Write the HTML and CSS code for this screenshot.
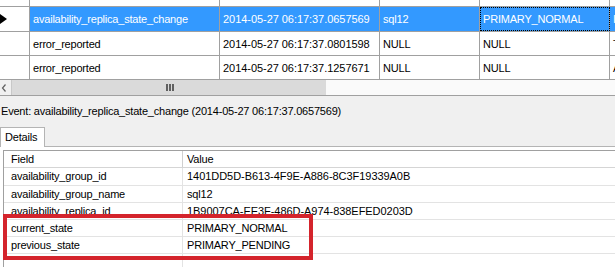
FILE: index.html
```html
<!DOCTYPE html>
<html>
<head>
<meta charset="utf-8">
<link rel="stylesheet" href="styles.css">
</head>
<body>
<div class="grid">
  <div class="row r0">
    <div class="cell hdr"></div>
    <div class="cell c1">log_flush_requested</div>
    <div class="cell c2"></div>
    <div class="cell c3"></div>
    <div class="cell c4"></div>
    <div class="cell c5"></div>
  </div>
  <div class="row r1 selected">
    <div class="cell hdr"><svg class="arrow" width="9" height="12" viewBox="0 0 9 12"><polygon points="0,1 7,6 0,11" fill="#000"/></svg></div>
    <div class="cell c1">availability_replica_state_change</div>
    <div class="cell c2 num">2014-05-27 06:17:37.0657569</div>
    <div class="cell c3">sql12</div>
    <div class="cell c4 focus">PRIMARY_NORMAL</div>
    <div class="cell c5">I</div>
  </div>
  <div class="row r2">
    <div class="cell hdr"></div>
    <div class="cell c1">error_reported</div>
    <div class="cell c2 num">2014-05-27 06:17:37.0801598</div>
    <div class="cell c3">NULL</div>
    <div class="cell c4">NULL</div>
    <div class="cell c5">T</div>
  </div>
  <div class="row r3">
    <div class="cell hdr"></div>
    <div class="cell c1">error_reported</div>
    <div class="cell c2 num">2014-05-27 06:17:37.1257671</div>
    <div class="cell c3">NULL</div>
    <div class="cell c4">NULL</div>
    <div class="cell c5">A</div>
  </div>
</div>
<div class="hscroll">
  <div class="sb-btn"><svg width="6" height="8" viewBox="0 0 6 8"><polyline points="4.5,0.5 1.5,4 4.5,7.5" fill="none" stroke="#606060" stroke-width="1.2"/></svg></div>
  <div class="sb-thumb"><span class="grip"></span><span class="grip"></span><span class="grip"></span></div>
  <div class="sb-track"></div>
</div>
<div class="lower">
  <div class="event">Event: availability_replica_state_change (2014-05-27 06:17:37.0657569)</div>
  <div class="tabs">
    <div class="tab">Details</div>
    <div class="tabline"></div>
  </div>
  <div class="tabpage">
    <div class="props">
      <div class="prow phead"><div class="pf">Field</div><div class="pv">Value</div></div>
      <div class="prow first"><div class="pf">availability_group_id</div><div class="pv num">1401DD5D-B613-4F9E-A886-8C3F19339A0B</div></div>
      <div class="prow"><div class="pf">availability_group_name</div><div class="pv">sql12</div></div>
      <div class="prow"><div class="pf">availability_replica_id</div><div class="pv num">1B9007CA-EE3F-486D-A974-838EFED0203D</div></div>
      <div class="prow"><div class="pf">current_state</div><div class="pv">PRIMARY_NORMAL</div></div>
      <div class="prow"><div class="pf">previous_state</div><div class="pv">PRIMARY_PENDING</div></div>
      <div class="prow"><div class="pf"></div><div class="pv"></div></div>
    </div>
    <div class="highlight"></div>
  </div>
</div>
</body>
</html>
```
FILE: styles.css
```css
* { box-sizing: border-box; }
html, body { margin: 0; padding: 0; }
body {
  width: 615px;
  height: 267px;
  overflow: hidden;
  background: #f0f0f0;
  font-family: "Liberation Sans", Arial, sans-serif;
  font-size: 11px;
  letter-spacing: -0.2px;
  color: #000;
}

/* top data grid */
.grid {
  background: #fff;
  margin-top: -18px;
}
.row {
  display: grid;
  grid-template-columns: 30px 190px 160px 100px 130px 1fr;
  border-bottom: 1px solid #a0a0a0;
}
.r0 { height: 25px; }
.r1 { height: 25px; }
.r2 { height: 24px; }
.r3 { height: 24px; }
.cell {
  display: flex;
  align-items: center;
  padding-left: 3px;
  white-space: nowrap;
  overflow: hidden;
  border-right: 1px solid #a0a0a0;
}
.cell.c5 { border-right: none; }
.cell.c2 { padding-left: 3px; }
.num { letter-spacing: -0.05px; }
.cell.hdr { padding-left: 0; background: #fff; }
.selected .cell:not(.hdr) {
  background: #3399ff;
  color: #fff;
}
.focus {
  outline: 1px dotted #000;
  outline-offset: -1px;
}
.arrow { display: block; }

/* horizontal scrollbar */
.hscroll {
  display: flex;
  height: 15px;
  background: #fafafa;
}
.sb-btn {
  width: 12px;
  background: #f0f0f0;
  border-right: 1px solid #c8c8c8;
  display: flex;
  align-items: center;
  padding-left: 1px;
}
.sb-btn svg { display: block; }
.sb-thumb {
  width: 314px;
  background: #dadada;
  display: flex;
  align-items: center;
  justify-content: center;
  gap: 1px;
  padding-left: 1px;
}
.grip {
  width: 2px;
  height: 7px;
  background: #606060;
}
.sb-track { flex: 1; }

/* lower details area */
.lower {
  border-top: 1px solid #a0a0a0;
  background: #f0f0f0;
}
.event {
  padding-top: 7px;
  line-height: 16px;
  height: 31px;
  white-space: nowrap;
  padding-left: 1px;
}
.tabs {
  display: flex;
  height: 20px;
}
.tab {
  width: 45px;
  background: #fff;
  border: 1px solid #b4b4b4;
  border-bottom: none;
  padding-left: 4px;
  line-height: 18px;
}
.tabline {
  flex: 1;
  border-bottom: 1px solid #b4b4b4;
}
.tabpage {
  position: relative;
  background: #fff;
  padding: 3px 0 0 3px;
  height: 130px;
}
.props {
  border-top: 1px solid #a0a0a0;
  border-left: 1px solid #a0a0a0;
  background: #fff;
}
.prow {
  display: grid;
  grid-template-columns: 179px 1fr;
  height: 17px;
  border-bottom: 1px solid #e3e3e3;
  line-height: 16px;
  white-space: nowrap;
}
.prow.first { height: 18px; line-height: 17px; }
.phead { border-bottom-color: #d5d5d5; }
.pf {
  padding-left: 7px;
  border-right: 1px solid #e3e3e3;
  overflow: hidden;
}
.phead .pf { border-right-color: #d0d0d0; }
.pv {
  padding-left: 4px;
  overflow: hidden;
}
.highlight {
  position: absolute;
  left: 3px;
  top: 67px;
  width: 310px;
  height: 46px;
  border: 4px solid #d4242c;
}
```
